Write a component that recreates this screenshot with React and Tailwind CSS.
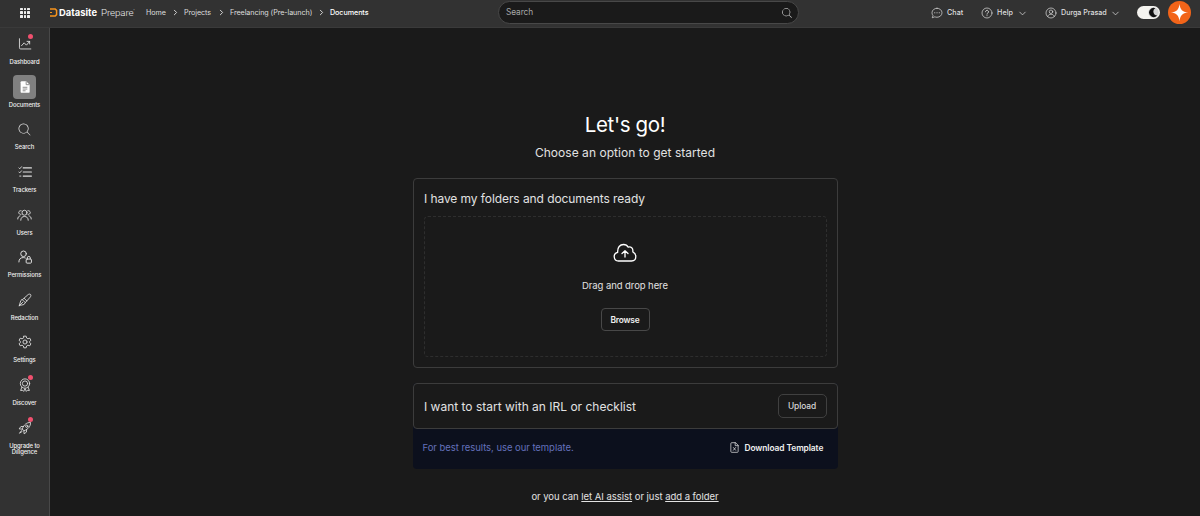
import React from "react";
import { PiMagnifyingGlassLight } from "react-icons/pi";
import { ChevronDown, ChevronRight } from "lucide-react";

function Svg({ className, children, strokeWidth = 1.5 }) {
  return (
    <svg
      viewBox="0 0 24 24"
      className={className}
      fill="none"
      stroke="currentColor"
      strokeWidth={strokeWidth}
      strokeLinecap="round"
      strokeLinejoin="round"
    >
      {children}
    </svg>
  );
}

function DashboardIcon() {
  return (
    <Svg className="size-[14px]">
      <path d="M2.500 3v15.500a2 2 0 0 0 2 2H22" />
      <path d="M6 15l4.500-5 4 4L20 7.500" />
      <path d="M15.500 7.500H20V12" />
    </Svg>
  );
}

function DocumentIcon() {
  return (
    <svg viewBox="0 0 24 24" className="size-[14px]">
      <path
        fill="#fff"
        d="M6.500 2H14l6 6v12a2 2 0 0 1-2 2H6.500a2 2 0 0 1-2-2V4a2 2 0 0 1 2-2z"
      />
      <path
        d="M14 2.500V8h5.500M8 12.500h8M8 15.500h8M8 18.500h5"
        fill="none"
        stroke="#808080"
        strokeWidth="1.500"
      />
    </svg>
  );
}

function TrackersIcon() {
  return (
    <Svg className="size-[14px]">
      <path d="M9 5h14M9 12h14M9 19h14" strokeWidth="2" />
      <path d="M1.500 5L3 6.500 6 3M1.500 12L3 13.500 6 10M3 19h2" />
    </Svg>
  );
}

function UsersIcon() {
  return (
    <svg
      viewBox="0 0 30 24"
      className="h-[12px] w-[15px]"
      fill="none"
      stroke="currentColor"
      strokeWidth="1.800"
      strokeLinecap="round"
    >
      <circle cx="15" cy="7.500" r="5" />
      <path d="M7.500 22.500c0-5 3-7.500 7.500-7.500s7.500 2.500 7.500 7.500" />
      <path d="M8 10.800A3.800 3.800 0 1 1 8.500 3.500M22 10.800a3.800 3.800 0 1 0-.5-7.300" />
      <path d="M1.500 20c0-3.500 1.500-5.500 4.500-6.200M28.500 20c0-3.500-1.500-5.500-4.500-6.200" />
    </svg>
  );
}

function PermissionsIcon() {
  return (
    <Svg className="size-[14px]" strokeWidth={1.7}>
      <circle cx="9.500" cy="6.500" r="4.800" />
      <path d="M1.500 20.500c0-5 3-7.500 7.500-7.500 1.300 0 2.500.2 3.500.7" />
      <rect x="14" y="15.500" width="9" height="7" rx="1.500" />
      <path d="M16 15.500v-2a2.500 2.500 0 0 1 5 0v2" />
    </Svg>
  );
}

function RedactionIcon() {
  return (
    <Svg className="size-[14px]">
      <path d="M7.500 11.500L17 3c1.500-1.200 3.500-1.500 4.500-.5s.7 3-.5 4.500L12.500 16.500" />
      <path d="M7.500 11.500l5 5-2 3c-2 1.200-5.500.8-8.500 2.500 1.700-3 1.300-6.500 2.500-8.500z" />
      <path d="M2 22l6-6M10.500 9l4.500 4.500" />
    </Svg>
  );
}

function SettingsIcon() {
  return (
    <Svg className="size-[14px]">
      <circle cx="12" cy="12" r="3.500" />
      <path d="M10 2h4l.8 3.200 2.200 1.300 3.200-1 2 3.500-2.400 2.200v1.600l2.400 2.200-2 3.500-3.200-1-2.200 1.300L14 22h-4l-.8-3.200L7 17.500l-3.200 1-2-3.500 2.400-2.200v-1.600L1.800 9l2-3.500 3.200 1 2.200-1.300z" />
    </Svg>
  );
}

function DiscoverIcon() {
  return (
    <Svg className="size-[14px]">
      <circle cx="12" cy="9.500" r="8" />
      <circle cx="12" cy="9.500" r="4.500" />
      <path d="M6.500 16l-2 5.500 3.500-.5 1.800 2 2.200-5 2.200 5 1.800-2 3.500.5-2-5.500" />
    </Svg>
  );
}

function RocketIcon() {
  return (
    <Svg className="size-[14px]">
      <path d="M7.500 13C10 6.500 14.500 2.500 21.500 2.500c0 7-4 11.500-10.500 14z" />
      <circle cx="15" cy="9" r="2" />
      <path d="M9.500 9.500H5L2 13.500l5.500.5M14.500 14.500V19l-4 3-.5-5.500" />
      <path d="M6 16.500l-3.500 4.500L7 18" />
    </Svg>
  );
}

function CloudUploadIcon() {
  return (
    <svg
      viewBox="0 0 24 20"
      className="h-[20px] w-[24px] text-white"
      fill="none"
      stroke="currentColor"
      strokeWidth="1.300"
      strokeLinecap="round"
      strokeLinejoin="round"
    >
      <path d="M5.500 18A4.400 4.400 0 0 1 4.700 9.300C4.300 4.300 7 1.500 10.500 1.500c2.200 0 3.800 1 4.700 2.700 2.700-.9 5.200 1 4.600 4.600 2 1 3 2.600 3 4.700 0 2.700-1.800 4.500-4.300 4.500z" />
      <path d="M12 14V8M9 10.500l3-2.800 3 2.800" />
    </svg>
  );
}

const NAV = [
  { label: "Dashboard", icon: <DashboardIcon />, dot: true },
  { label: "Documents", icon: <DocumentIcon />, active: true },
  { label: "Search", icon: <PiMagnifyingGlassLight className="size-[15px]" /> },
  { label: "Trackers", icon: <TrackersIcon /> },
  { label: "Users", icon: <UsersIcon /> },
  { label: "Permissions", icon: <PermissionsIcon /> },
  { label: "Redaction", icon: <RedactionIcon /> },
  { label: "Settings", icon: <SettingsIcon /> },
  { label: "Discover", icon: <DiscoverIcon />, dot: true },
  { label: "Upgrade to Diligence", icon: <RocketIcon />, dot: true },
];

function NavItem({ item }) {
  return (
    <a className="flex h-[42.650px] shrink-0 flex-col items-center text-[#e0e0e0]">
      <div
        className={`relative flex h-6 w-[23px] shrink-0 items-center justify-center rounded-[4px] ${item.active ? "bg-[#808080]" : ""}`}
      >
        {item.icon}
        {item.dot && (
          <span className="absolute top-[1.500px] right-[3px] size-[5px] rounded-full bg-[#f0506e]" />
        )}
      </div>
      <span className="mt-[3px] w-[40px] text-center text-[5.900px] leading-[6px] font-medium tracking-[-0.080px] text-[#f2f2f2]">
        {item.label}
      </span>
    </a>
  );
}

function Crumb({ className, children }) {
  return <span className={`whitespace-nowrap ${className}`}>{children}</span>;
}

function Separator() {
  return <ChevronRight className="mr-[4.500px] ml-[4.500px] size-[9px] shrink-0" strokeWidth={2.5} />;
}

function Header() {
  return (
    <header className="flex h-7 shrink-0 items-center border-b border-[#3a3a3a] bg-[#323232] pb-[2px] text-[7.200px] tracking-[-0.080px] text-[#dedede]">
      <div className="ml-[20px] grid size-[10px] grid-cols-3 gap-px">
        {Array.from({ length: 9 }).map((_, i) => (
          <span key={i} className="rounded-[0.5px] bg-[#eeeeee]" />
        ))}
      </div>

      <div className="ml-5 flex w-[96px] items-center">
        <svg viewBox="0 0 8 9" className="h-[9px] w-2" fill="none" stroke="#f7941d" strokeWidth="1.500">
          <path d="M0 1H5.200L6.600 2.400V6.600L5.200 8H0" />
          <path d="M0 4.500H2" strokeWidth="1" />
        </svg>
        <span className="ml-px w-[42px] whitespace-nowrap text-[9.400px] leading-3 font-bold tracking-[0.020px] text-white">
          Datasite
        </span>
        <span className="flex items-start pt-px font-[Roboto] whitespace-nowrap text-[9.800px] leading-3 font-light tracking-[-0.100px] text-[#eeeeee]">
          Prepare<span className="text-[6px] leading-[8px]">'</span>
        </span>
      </div>

      <nav className="flex w-[352px] items-center leading-3">
        <Crumb className="w-[20px]">Home</Crumb>
        <Separator />
        <Crumb className="w-[28px]">Projects</Crumb>
        <Separator />
        <Crumb className="w-[82px]">Freelancing (Pre-launch)</Crumb>
        <Separator />
        <Crumb className="font-medium text-white">Documents</Crumb>
      </nav>

      <div className="flex h-[23px] w-[301px] items-center justify-between rounded-full border border-[#484848] bg-[#1a1a1a] pr-[5px] pl-[7px] text-[8.300px] text-[#a8a8a8]">
        <span>Search</span>
        <PiMagnifyingGlassLight className="size-[12px] text-[#eeeeee]" />
      </div>

      <div className="ml-[132px] flex items-center pt-px font-medium">
        <Svg className="size-3" strokeWidth={1.4}>
          <path d="M12 2.500c5.500 0 10 4 10 9s-4.500 9-10 9c-1.500 0-3-.3-4.300-.9L2.500 21.500l1.500-4.400A8.500 8.500 0 0 1 2 11.500c0-5 4.500-9 10-9z" />
          <path d="M7.500 11.500h.1M12 11.500h.1M16.500 11.500h.1" strokeWidth="2.200" />
        </Svg>
        <span className="ml-[4px] w-[34px] tracking-[0.050px]">Chat</span>
        <Svg className="size-3" strokeWidth={1.4}>
          <circle cx="12" cy="12" r="10" />
          <path d="M9 9.500a3 3 0 1 1 4.500 2.600c-1 .6-1.500 1-1.500 2.200M12 17.300v.2" strokeWidth="1.800" />
        </Svg>
        <span className="ml-[4px] w-[20px] tracking-[0.050px]">Help</span>
        <ChevronDown className="size-[11px]" strokeWidth={1.6} />
        <Svg className="ml-[17px] size-3" strokeWidth={1.4}>
          <circle cx="12" cy="12" r="10" />
          <circle cx="12" cy="9.500" r="3.500" />
          <path d="M5.500 19c.8-3 3-4.500 6.500-4.500s5.700 1.500 6.500 4.500" />
        </Svg>
        <span className="ml-[4px] w-[49px] whitespace-nowrap tracking-[-0.060px]">Durga Prasad</span>
        <ChevronDown className="size-[11px]" strokeWidth={1.6} />
      </div>

      <div className="ml-4 flex h-[13px] w-[23px] items-center justify-end rounded-full bg-[#f5f4f0] pr-px">
        <svg viewBox="0 0 12 12" className="size-[11px]">
          <circle cx="6" cy="6" r="5.700" fill="#d4d4d4" />
          <path d="M8 1.300A5 5 0 1 0 10 9.300 4.300 4.300 0 0 1 8 1.300z" fill="#111" />
        </svg>
      </div>

      <svg viewBox="0 0 24 24" className="ml-2 size-[23px] shrink-0">
        <circle cx="12" cy="12" r="12" fill="#f26419" />
        <path
          d="M12 3c.9 6.200 2.800 8.100 9 9-6.200.9-8.100 2.800-9 9-.9-6.200-2.800-8.100-9-9 6.200-.9 8.100-2.800 9-9z"
          fill="#fff"
        />
      </svg>
    </header>
  );
}

export default function App() {
  return (
    <div className="flex h-[516px] w-[1200px] flex-col overflow-hidden bg-[#1a1a1a] font-[Inter,sans-serif]">
      <Header />
      <div className="flex min-h-0 flex-1">
        <aside className="flex w-[50px] shrink-0 flex-col border-r border-[#484848] bg-[#323232] pt-1">
          {NAV.map((item) => (
            <NavItem key={item.label} item={item} />
          ))}
        </aside>

        <main className="flex flex-1 flex-col items-center pt-[84px] text-[#e2e2e2]">
          <h1 className="text-[20.500px] leading-[26px] tracking-[-0.350px] text-white">Let's go!</h1>
          <p className="mt-[7px] text-[12px] leading-4 tracking-[0.030px]">
            Choose an option to get started
          </p>

          {/* Upload card */}
          <section className="mt-[17px] h-[190px] w-[425px] rounded-[4px] border border-[#3c3c3c] px-[10px] pt-3">
            <h2 className="ml-[0.500px] text-[12px] leading-4 tracking-[-0.080px] whitespace-nowrap">
              I have my folders and documents ready
            </h2>
            <div className="mt-[9px] flex h-[141px] flex-col items-center rounded-[4px] border border-dashed border-[#2e2e2e] pt-[26px]">
              <CloudUploadIcon />
              <p className="mt-[17px] text-[9.500px] leading-3 tracking-[-0.080px]">Drag and drop here</p>
              <button className="mt-4 h-[23px] w-[49px] rounded-[4px] border border-[#484848] pt-px text-[8.400px] font-semibold tracking-[-0.180px] text-[#f0f0f0]">
                Browse
              </button>
            </div>
          </section>

          {/* Checklist card */}
          <section className="mt-[15px] w-[425px] rounded-[4px] bg-[#0c101d]">
            <div className="flex h-[46px] items-center justify-between rounded-[4px] border border-[#3c3c3c] bg-[#1a1a1a] px-[10px]">
              <h2 className="mt-[2px] ml-[0.500px] text-[12px] leading-4 whitespace-nowrap">
                I want to start with an IRL or checklist
              </h2>
              <button className="mb-px h-6 w-[49px] rounded-[5px] border border-[#404040] pt-px text-[8.400px] font-medium tracking-[-0.080px] text-[#d8d8d8]">
                Upload
              </button>
            </div>
            <div className="flex h-10 items-center justify-between pr-[15px] pb-[2px] pl-[10px]">
              <p className="text-[9.500px] tracking-[-0.050px] text-[#6470bb]">For best results, use our template.</p>
              <div className="flex items-center text-[8.400px] font-semibold tracking-[-0.080px] text-[#f0f0f0]">
                <Svg className="mr-[5px] size-[11px]">
                  <path d="M13.500 1.500H6a2 2 0 0 0-2 2v17a2 2 0 0 0 2 2h12a2 2 0 0 0 2-2V8zM13.500 1.500V8H20" />
                  <path d="M9.500 12l5 6M14.500 12l-5 6" />
                </Svg>
                <span className="w-[78px] whitespace-nowrap">Download Template</span>
              </div>
            </div>
          </section>

          <p className="mt-[22px] text-[9.500px] leading-3 tracking-[-0.030px] whitespace-nowrap">
            or you can <a className="underline">let AI assist</a> or just{" "}
            <a className="underline">add a folder</a>
          </p>
        </main>
      </div>
    </div>
  );
}
